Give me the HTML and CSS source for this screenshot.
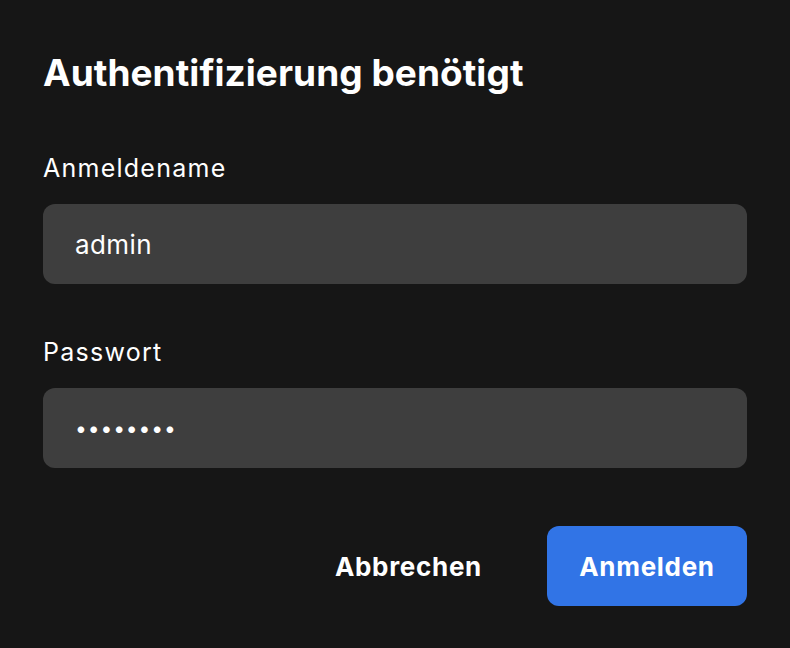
FILE: index.html
```html
<!DOCTYPE html>
<html lang="de">
<head>
	<meta charset="UTF-8">
	<title>Authentifizierung benötigt</title>
	<link rel="stylesheet" href="styles.css">
</head>
<body>
	<form class="dialog" onsubmit="return false">
		<h1 class="title">Authentifizierung benötigt</h1>
		<label class="field">
			<span class="label">Anmeldename</span>
			<input class="input" type="text" value="admin">
		</label>
		<label class="field field2">
			<span class="label">Passwort</span>
			<input class="input pw" type="password" value="geheim12">
		</label>
		<div class="actions">
			<button class="btn cancel" type="button">Abbrechen</button>
			<button class="btn ok" type="submit">Anmelden</button>
		</div>
	</form>
</body>
</html>
```

FILE: styles.css
```css
*{
	margin: 0;
	padding: 0;
	box-sizing: border-box;
}
html,body{
	background: #161616;
	height: 100%;
}
body{
	font-family: Inter, "Liberation Sans", sans-serif;
	color: #fff;
}
.dialog{
	padding: 51px 43px 0 43px;
	display: flex;
	flex-direction: column;
}
.title{
	font-size: 37px;
	line-height: 44px;
	font-weight: 700;
	letter-spacing: 0.05px;
}
.field{
	display: flex;
	flex-direction: column;
	margin-top: 58px;
}
.field2{
	margin-top: 53px;
}
.label{
	font-size: 25px;
	line-height: 30px;
	font-weight: 400;
	letter-spacing: 1.25px;
	margin-bottom: 21px;
}
.input{
	height: 80px;
	border: none;
	outline: none;
	border-radius: 12px;
	background: #3e3e3e;
	color: #fff;
	font-family: inherit;
	font-size: 26px;
	letter-spacing: 0.4px;
	padding: 0 32px;
}
.pw{
	font-size: 21px;
	letter-spacing: 0.9px;
}
.actions{
	display: flex;
	justify-content: flex-end;
	gap: 32px;
	margin-top: 58px;
}
.btn{
	height: 80px;
	padding: 0 33px;
	border: none;
	border-radius: 12px;
	font-family: inherit;
	font-size: 26px;
	font-weight: 700;
	letter-spacing: 0.7px;
	color: #fff;
	background: transparent;
}
.ok{
	width: 200px;
	padding: 0;
	background: #3174e6;
}
```
